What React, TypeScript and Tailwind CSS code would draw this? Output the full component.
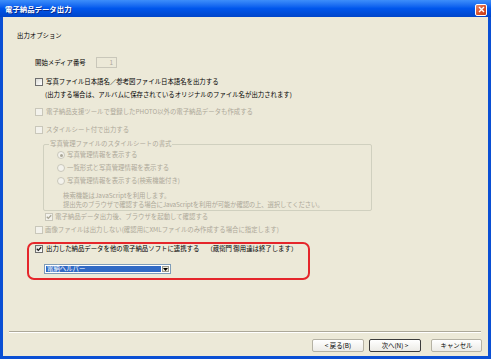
import React from "react";

const FONT: React.CSSProperties = {
  fontFamily: '"Noto Sans CJK JP", "Noto Sans", sans-serif',
};

function CheckBox({ checked = false, disabled = false }: { checked?: boolean; disabled?: boolean }) {
  return (
    <span
      className={
        disabled
          ? "flex h-[8px] w-[8px] shrink-0 items-center justify-center border border-[#C9C7BA] bg-[#F3F2EC]"
          : "flex h-[8px] w-[8px] shrink-0 items-center justify-center border border-[#6F6F6F] bg-gradient-to-br from-[#DCDCD7] to-white"
      }
    >
      {checked && (
        <svg width="6" height="6" viewBox="0 0 6 6">
          <path
            d="M0.8 2.8 L2.3 4.4 L5.2 1.2"
            fill="none"
            stroke={disabled ? "#A8A594" : "#1A1A1A"}
            strokeWidth="1.3"
          />
        </svg>
      )}
    </span>
  );
}

function Radio({ checked = false }: { checked?: boolean }) {
  return (
    <span className="flex h-[8px] w-[8px] shrink-0 items-center justify-center rounded-full border border-[#C9C7BA] bg-[#F3F2EC]">
      {checked && <span className="h-[3px] w-[3px] rounded-full bg-[#ACA899]" />}
    </span>
  );
}

const txt = "whitespace-nowrap text-[6.4px] leading-[8px]";
const dis = "whitespace-nowrap text-[6.4px] leading-[8px] text-[#ACA899]";

export default function App() {
  return (
    <div className="flex h-[359px] w-[491px] flex-col overflow-hidden bg-[#0A4FD4]" style={FONT}>
      {/* Title bar */}
      <div className="flex h-[17px] shrink-0 items-center justify-between bg-gradient-to-b from-[#3D8EFA] via-[#0056EC] to-[#0045C9] pl-[5px] pr-[4px]">
        <span className="whitespace-nowrap text-[7.4px] font-bold leading-[10px] text-white [text-shadow:1px_1px_0_#0A2A8A]">
          電子納品データ出力
        </span>
        <span className="mt-[2px] flex h-[12px] w-[12px] items-center justify-center rounded-[2px] border border-white bg-gradient-to-br from-[#E98B6C] via-[#D9532D] to-[#C33A14]">
          <svg width="7" height="7" viewBox="0 0 7 7">
            <path d="M1 1 L6 6 M6 1 L1 6" stroke="white" strokeWidth="1.4" />
          </svg>
        </span>
      </div>

      {/* Body */}
      <div className="mx-[3px] mb-[3px] flex flex-1 flex-col bg-[#ECE9D8] text-black">
        <div className={`${txt} ml-[14px] mt-[15px] h-[8px]`}>出力オプション</div>

        <div className="ml-[32px] mt-[17px] flex h-[11px] items-center">
          <span className={`${txt} w-[61px]`}>開始メディア番号</span>
          <span className="flex h-[11px] w-[21px] items-center justify-end border border-[#C9C7BA] bg-[#ECE9D8] pr-[3px]">
            <span className="text-[6.4px] leading-[8px] text-[#ACA899]">1</span>
          </span>
        </div>

        <div className="ml-[32px] mt-[10px] flex h-[8px] items-center gap-[3px]">
          <CheckBox />
          <span className={txt}>写真ファイル日本語名／参考図ファイル日本語名を出力する</span>
        </div>
        <div className={`${txt} ml-[42px] mt-[5px] h-[8px]`}>
          (出力する場合は、アルバムに保存されているオリジナルのファイル名が出力されます)
        </div>

        <div className="ml-[32px] mt-[9px] flex h-[8px] items-center gap-[3px]">
          <CheckBox disabled />
          <span className={dis}>電子納品支援ツールで登録したPHOTO以外の電子納品データも作成する</span>
        </div>

        <div className="ml-[32px] mt-[10px] flex h-[8px] items-center gap-[3px]">
          <CheckBox disabled />
          <span className={dis}>スタイルシート付で出力する</span>
        </div>

        {/* Group box */}
        <div className="relative ml-[40px] mt-[10px] flex h-[67px] w-[329px] flex-col rounded-[2px] border border-[#D0D0BF]">
          <span className={`${dis} absolute left-[5px] top-[-5px] bg-[#ECE9D8] px-[1px]`}>
            写真管理ファイルのスタイルシートの書式
          </span>
          <div className="ml-[13px] mt-[6px] flex h-[8px] items-center gap-[2px]">
            <Radio checked />
            <span className={dis}>写真管理情報を表示する</span>
          </div>
          <div className="ml-[13px] mt-[5px] flex h-[8px] items-center gap-[2px]">
            <Radio />
            <span className={dis}>一覧形式と写真管理情報を表示する</span>
          </div>
          <div className="ml-[13px] mt-[5px] flex h-[8px] items-center gap-[2px]">
            <Radio />
            <span className={dis}>写真管理情報を表示する(検索機能付き)</span>
          </div>
          <div className={`${dis} ml-[19px] mt-[7px] h-[8px]`}>検索機能はJavaScriptを利用します。</div>
          <div className={`${dis} ml-[19px] mt-[1px] h-[8px] tracking-[-0.15px]`}>
            提出先のブラウザで確認する場合にJavaScriptを利用が可能か確認の上、選択してください。
          </div>
        </div>

        <div className="ml-[42px] mt-[2px] flex h-[8px] items-center gap-[2px]">
          <CheckBox checked disabled />
          <span className={dis}>電子納品データ出力後、ブラウザを起動して確認する</span>
        </div>

        <div className="ml-[32px] mt-[5px] flex h-[8px] items-center gap-[2px]">
          <CheckBox disabled />
          <span className={dis}>画像ファイルは出力しない(確認用にXMLファイルのみ作成する場合に指定します)</span>
        </div>

        {/* Highlighted box */}
        <div className="ml-[24px] mt-[8px] flex h-[38px] w-[283px] flex-col rounded-[7px] border-2 border-[#E5262B]">
          <div className="ml-[6px] mt-[1px] flex h-[8px] items-center gap-[3px]">
            <CheckBox checked />
            <span className={txt}>出力した納品データを他の電子納品ソフトに連携する</span>
            <span className={`${txt} ml-[4px]`}>（蔵衛門 御用達は終了します）</span>
          </div>
          <div className="ml-[15px] mt-[11px] flex h-[10px] w-[127px] items-stretch border border-[#7F9DB9] bg-white p-[1px]">
            <div className="flex flex-1 items-center bg-[#316AC5] pl-[1px]">
              <span className="whitespace-nowrap text-[6.4px] leading-[8px] text-white">電納ヘルパー</span>
            </div>
            <div className="ml-[1px] flex w-[7px] items-center justify-center border border-[#9C9A8F] bg-[#ECE9D8]">
              <svg width="5" height="3" viewBox="0 0 5 3">
                <path d="M0 0 L5 0 L2.5 3 Z" fill="black" />
              </svg>
            </div>
          </div>
        </div>

        <div className="flex-1" />

        {/* Separator */}
        <div className="ml-[6px] w-[472px]">
          <div className="h-[1px] bg-[#ACA899]" />
          <div className="h-[1px] bg-white" />
        </div>

        {/* Buttons */}
        <div className="mb-[4px] mr-[6px] mt-[6px] flex h-[13px] justify-end">
          <button className="flex h-[13px] w-[52px] items-center justify-center rounded-[2px] border border-[#B5B2A4] bg-gradient-to-b from-white to-[#ECEBE6]">
            <span className={txt}>&lt; 戻る(B)</span>
          </button>
          <button className="ml-[5px] flex h-[13px] w-[52px] items-center justify-center rounded-[2px] border border-[#3C3C3C] bg-gradient-to-b from-white to-[#ECEBE6]">
            <span className={txt}>次へ(N) &gt;</span>
          </button>
          <button className="ml-[10px] flex h-[13px] w-[51px] items-center justify-center rounded-[2px] border border-[#B5B2A4] bg-gradient-to-b from-white to-[#ECEBE6]">
            <span className={txt}>キャンセル</span>
          </button>
        </div>
      </div>
    </div>
  );
}
